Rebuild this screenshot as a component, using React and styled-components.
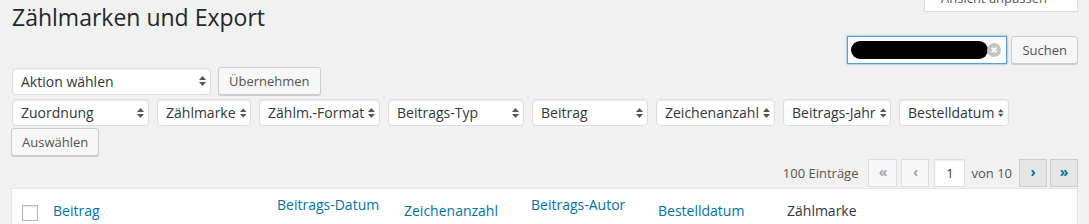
import React from 'react';
import styled, { createGlobalStyle } from 'styled-components';

const GlobalStyle = createGlobalStyle`
  html, body {
    margin: 0;
    padding: 0;
    background: #f1f1f1;
  }
  body {
    font-family: "Open Sans", "Liberation Sans", sans-serif;
    font-size: 13px;
    color: #444;
    overflow: hidden;
  }
`;

const Wrap = styled.div`
  display: flex;
  flex-direction: column;
  padding: 0 11px;
`;

const Header = styled.div`
  display: flex;
  justify-content: space-between;
  align-items: flex-start;
  height: 36px;
`;

const Title = styled.h1`
  margin: 0;
  padding: 3px 0 0 1px;
  font-size: 23px;
  font-weight: 400;
  line-height: 29px;
  color: #23282d;
`;

const ScreenTab = styled.button`
  display: flex;
  align-items: center;
  gap: 11px;
  box-sizing: border-box;
  width: 154px;
  height: 28px;
  margin-top: -16px;
  padding: 3px 6px 3px 16px;
  background: #fff;
  border: 1px solid #ddd;
  border-top: none;
  box-shadow: 0 1px 1px -1px rgba(0, 0, 0, 0.1);
  font-family: inherit;
  font-size: 13px;
  line-height: 22px;
  color: #555;
`;

const Row = styled.div`
  display: flex;
  align-items: center;
  justify-content: ${p => (p.$end ? 'flex-end' : 'flex-start')};
  gap: ${p => p.$gap || 0}px;
  margin-top: ${p => p.$top || 0}px;
`;

const SearchBox = styled.div`
  display: flex;
  align-items: center;
  box-sizing: border-box;
  width: 160px;
  height: 28px;
  padding: 0 5px 0 3px;
  background: #fff;
  border: 1px solid #5b9dd9;
  box-shadow: 0 0 2px rgba(30, 140, 190, 0.8);
`;

const Redacted = styled.span`
  display: block;
  width: 137px;
  height: 18px;
  border-radius: 9px;
  background: #000;
`;

const ClearIcon = styled.svg`
  margin-left: -1px;
  flex: none;
`;

const Button = styled.button`
  box-sizing: border-box;
  height: 28px;
  padding: 0 10px 1px;
  background: #f7f7f7;
  border: 1px solid #ccc;
  border-radius: 3px;
  box-shadow: 0 1px 0 #ccc;
  font-family: inherit;
  font-size: 13px;
  line-height: 26px;
  color: #555;
  margin-left: ${p => p.$ml || 0}px;
`;

const SelectBox = styled.div`
  display: flex;
  align-items: center;
  justify-content: space-between;
  gap: 4px;
  box-sizing: border-box;
  width: ${p => p.$w}px;
  height: 27px;
  margin-left: 1px;
  padding: 0 4px 0 8px;
  background: #fff;
  border: 1px solid #ddd;
  border-radius: 4px;
  box-shadow: inset 0 1px 2px rgba(0, 0, 0, 0.07);
  font-size: 14px;
  color: #32373c;
  white-space: nowrap;
`;

const Count = styled.span`
  font-size: 13px;
  color: #555;
  margin-right: 10px;
`;

const PageBtn = styled.span`
  display: flex;
  align-items: center;
  justify-content: center;
  box-sizing: border-box;
  width: ${p => p.$w || 28}px;
  height: 28px;
  margin-left: ${p => p.$ml || 0}px;
  border: 1px solid ${p => (p.$on ? '#ccc' : '#ddd')};
  background: ${p => (p.$on ? '#e5e5e5' : '#f7f7f7')};
  color: ${p => (p.$on ? '#0073aa' : '#a0a5aa')};
  font-size: 14px;
  font-weight: 700;
  line-height: 1;
  padding-bottom: 2px;
`;

const PageInput = styled.span`
  display: flex;
  align-items: center;
  justify-content: center;
  box-sizing: border-box;
  width: 31px;
  height: 28px;
  margin-left: 5px;
  background: #fff;
  border: 1px solid #ddd;
  box-shadow: inset 0 1px 2px rgba(0, 0, 0, 0.07);
  font-size: 13px;
  color: #32373c;
`;

const Of = styled.span`
  margin: 0 7px 0 6px;
  font-size: 13px;
  color: #555;
`;

const Table = styled.div`
  margin-top: 1px;
  height: 80px;
  background: #fff;
  border: 1px solid #e5e5e5;
  box-shadow: 0 1px 1px rgba(0, 0, 0, 0.04);
`;

const HeadRow = styled.div`
  display: grid;
  grid-template-columns: 31px 224px 127px 127px 127px 129px 1fr;
`;

const CbCell = styled.div`
  padding: 16px 0 0 10px;
`;

const Checkbox = styled.span`
  display: block;
  box-sizing: border-box;
  width: 16px;
  height: 16px;
  background: #fff;
  border: 1px solid #b4b9be;
  box-shadow: inset 0 1px 2px rgba(0, 0, 0, 0.1);
`;

const Th = styled.div`
  padding: ${p => (p.$raised ? 6 : 12)}px 10px 0;
  font-size: 14px;
  line-height: 20px;
  color: #32373c;
  white-space: nowrap;

  a {
    color: #0073aa;
    text-decoration: none;
  }
`;

const Arrows = () => (
  <svg width="7" height="10" viewBox="0 0 7 10">
    <polygon points="0,4 3.5,0 7,4" fill="#555" />
    <polygon points="0,6 3.5,10 7,6" fill="#555" />
  </svg>
);

const Select = ({ w, children }) => (
  <SelectBox $w={w}>
    <span>{children}</span>
    <Arrows />
  </SelectBox>
);

const filters = [
  ['Zuordnung', 137],
  ['Zählmarke', 94],
  ['Zählm.-Format', 121],
  ['Beitrags-Typ', 136],
  ['Beitrag', 116],
  ['Zeichenanzahl', 119],
  ['Beitrags-Jahr', 108],
  ['Bestelldatum', 110],
];

const columns = [
  { label: 'Beitrag', link: true },
  { label: 'Beitrags-Datum', link: true, raised: true },
  { label: 'Zeichenanzahl', link: true },
  { label: 'Beitrags-Autor', link: true, raised: true },
  { label: 'Bestelldatum', link: true },
  { label: 'Zählmarke' },
];

export default function App() {
  return (
    <>
      <GlobalStyle />
      <Wrap>
        <Header>
          <Title>Zählmarken und Export</Title>
          <ScreenTab type="button">
            <span>Ansicht anpassen</span>
            <svg width="9" height="5" viewBox="0 0 9 5">
              <polygon points="0,0 9,0 4.5,5" fill="#a0a5aa" />
            </svg>
          </ScreenTab>
        </Header>

        <Row $end $gap={4}>
          <SearchBox>
            <Redacted />
            <ClearIcon width="14" height="14" viewBox="0 0 14 14">
              <circle cx="7" cy="7" r="7" fill="#c4c4c4" />
              <path d="M4.6 4.6 L9.4 9.4 M9.4 4.6 L4.6 9.4" stroke="#fff" strokeWidth="1.6" />
            </ClearIcon>
          </SearchBox>
          <Button type="button">Suchen</Button>
        </Row>

        <Row $top={3}>
          <Select w={199}>Aktion wählen</Select>
          <Button type="button" $ml={7}>Übernehmen</Button>
        </Row>

        <Row $top={4} $gap={7}>
          {filters.map(([label, w]) => (
            <Select key={label} w={w}>{label}</Select>
          ))}
        </Row>

        <Row $top={2}>
          <Button type="button">Auswählen</Button>
        </Row>

        <Row $end $top={3}>
          <Count>100 Einträge</Count>
          <PageBtn $w={29}>«</PageBtn>
          <PageBtn $ml={4}>‹</PageBtn>
          <PageInput>1</PageInput>
          <Of>von 10</Of>
          <PageBtn $on>›</PageBtn>
          <PageBtn $on $ml={3}>»</PageBtn>
        </Row>

        <Table>
          <HeadRow>
            <CbCell>
              <Checkbox />
            </CbCell>
            {columns.map(c => (
              <Th key={c.label} $raised={c.raised}>
                {c.link ? <a href="#">{c.label}</a> : c.label}
              </Th>
            ))}
          </HeadRow>
        </Table>
      </Wrap>
    </>
  );
}
